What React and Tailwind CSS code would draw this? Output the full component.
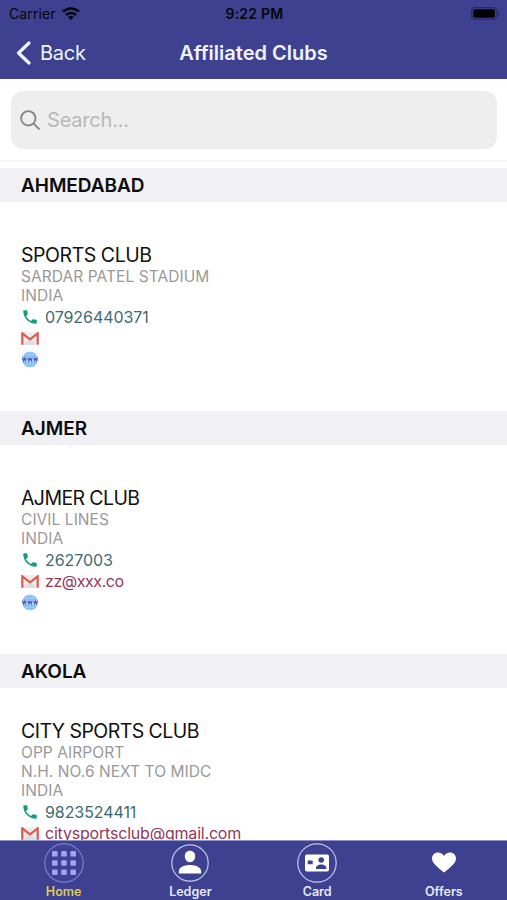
const clubs = [
  {
    city: "AHMEDABAD",
    pad: "pt-[42px]",
    name: "SPORTS CLUB",
    nameClass: "tracking-[-0.45px]",
    lines: ["SARDAR PATEL STADIUM", "INDIA"],
    phone: "07926440371",
    email: "",
  },
  {
    city: "AJMER",
    pad: "pt-[42px]",
    name: "AJMER CLUB",
    nameClass: "tracking-[-0.6px]",
    lines: ["CIVIL LINES", "INDIA"],
    phone: "2627003",
    email: "zz@xxx.co",
    emailClass: "tracking-[-0.45px]",
  },
  {
    city: "AKOLA",
    pad: "pt-8",
    name: "CITY SPORTS CLUB",
    nameClass: "tracking-[-0.55px]",
    lines: ["OPP AIRPORT", "N.H. NO.6 NEXT TO MIDC", "INDIA"],
    phone: "9823524411",
    email: "citysportsclub@gmail.com",
    emailClass: "tracking-[-0.2px]",
  },
];

function WifiIcon() {
  return (
    <svg width="18" height="13" viewBox="0 0 18 13" fill="none" stroke="#06060f" strokeWidth="2.5">
      <path d="M1 4.700a11.400 11.400 0 0 1 16 0" />
      <path d="M4 8a7.200 7.200 0 0 1 10 0" />
      <path d="M9 13 6.200 10.100a4 4 0 0 1 5.600 0Z" fill="#06060f" stroke="none" />
    </svg>
  );
}

function BatteryIcon() {
  return (
    <svg width="29" height="13" viewBox="0 0 29 13">
      <rect x="0.6" y="0.6" width="25" height="11.8" rx="3.4" fill="none" stroke="#2a2b62" strokeWidth="1.2" />
      <rect x="2.2" y="2.2" width="21.8" height="8.6" rx="1.8" fill="#000" />
      <path d="M27 4.300q1.600.7 1.600 2.200T27 8.700Z" fill="#2a2b62" />
    </svg>
  );
}

function PhoneIcon() {
  return (
    <svg width="18" height="18" viewBox="0 0 24 24" fill="#0f9f80">
      <path d="M6.620 10.790c1.440 2.830 3.760 5.140 6.590 6.590l2.200-2.200c.27-.27.67-.36 1.020-.24 1.120.37 2.330.57 3.570.57.55 0 1 .45 1 1V20c0 .55-.45 1-1 1-9.390 0-17-7.610-17-17 0-.55.45-1 1-1h3.500c.55 0 1 .45 1 1 0 1.250.2 2.450.57 3.570.11.35.03.74-.25 1.020l-2.200 2.200z" />
    </svg>
  );
}

function GmailIcon() {
  return (
    <svg width="18" height="13" viewBox="0 0 18 13">
      <rect x="0.3" y="0.3" width="17.4" height="12.4" rx="1" fill="#ececec" />
      <path d="M2.500 12.700 9 6.800l6.500 5.900Z" fill="#dedede" />
      <path d="M1.300 12.700V1.400L9 7.400l7.700-6v11.300" fill="none" stroke="#dc5a52" strokeWidth="2.2" />
    </svg>
  );
}

function WebIcon() {
  return (
    <svg width="18" height="17" viewBox="0 0 18 17">
      <circle cx="9" cy="8.5" r="7.8" fill="#74b5f5" />
      <g fill="none" stroke="#c5e1fc" strokeWidth="0.6">
        <ellipse cx="9" cy="8.5" rx="4" ry="7.8" />
        <path d="M9 .8v15.400M2.800 4h12.400M2.800 13h12.400" />
      </g>
      <rect x="1" y="5.9" width="16" height="4.8" fill="#b4d7fb" />
      <g fill="none" stroke="#4c56b4" strokeWidth="1.1">
        <path d="m1.500 6.700.9 3 1-2.500 1 2.500.9-3M6.900 6.700l.9 3L9 7.200l1.200 2.500.9-3M12.700 6.700l.9 3 1-2.500 1 2.500.9-3" />
      </g>
    </svg>
  );
}

function ContactRow({ icon, children, textClass = "" }) {
  return (
    <div className="flex h-[21.5px] items-center gap-1.5">
      <span className="flex w-[18px] justify-center">{icon}</span>
      <span className={`text-[16px] leading-[21px] ${textClass}`}>{children}</span>
    </div>
  );
}

function Club({ club }) {
  return (
    <section className="h-[243px] shrink-0">
      <h2 className="h-[34px] bg-[#f0f0f5] pl-[21px] pt-px text-[19px] font-semibold leading-[34px] tracking-[-0.05px] text-[#0b0b0b]">
        {club.city}
      </h2>
      <div className={`pl-[21px] ${club.pad}`}>
        <h3 className={`h-[23px] text-[19.5px] leading-[22px] text-[#111] ${club.nameClass}`}>{club.name}</h3>
        {club.lines.map((line) => (
          <p key={line} className="h-[19px] text-[15.5px] leading-[19px] tracking-[0.06px] text-[#999]">{line}</p>
        ))}
        <div className="mt-px">
          <ContactRow icon={<PhoneIcon />} textClass="pt-px text-[#3d6a72] tracking-[-0.08px]">{club.phone}</ContactRow>
          <ContactRow icon={<GmailIcon />} textClass={`text-[#90385c] ${club.emailClass || ""}`}>{club.email}</ContactRow>
          <ContactRow icon={<WebIcon />} />
        </div>
      </div>
    </section>
  );
}

function GridIcon() {
  return (
    <svg width="40" height="40" viewBox="0 0 40 40">
      <circle cx="20" cy="20" r="19.2" fill="none" stroke="#7a7fd6" strokeWidth="1.2" />
      {[8, 17.2, 26.4].map((y) =>
        [8, 17.2, 26.4].map((x) => (
          <rect key={`${x}-${y}`} x={x} y={y} width="5.6" height="5.6" rx="1.2" fill="#9fa4fa" />
        ))
      )}
    </svg>
  );
}

function PersonIcon() {
  return (
    <svg width="40" height="40" viewBox="0 0 40 40">
      <circle cx="20" cy="20" r="18.2" fill="none" stroke="#c3c6f0" strokeWidth="1.2" />
      <path d="M20 7.800c3.200 0 5.200 2.400 5.200 5.400 0 3.200-2.200 6-5.200 6s-5.200-2.800-5.200-6c0-3 2-5.400 5.200-5.400ZM8.800 30.500v-2c0-4.500 6-6.500 11.200-6.500s11.200 2 11.200 6.500v2Z" fill="#fff" />
    </svg>
  );
}

function CardIcon() {
  return (
    <svg width="40" height="40" viewBox="0 0 40 40">
      <circle cx="20" cy="20" r="19.2" fill="none" stroke="#c3c6f0" strokeWidth="1.2" />
      <rect x="8" y="11.5" width="24" height="17" rx="1.8" fill="#fff" />
      <g fill="#3d418f">
        <rect x="10.7" y="17.5" width="5" height="3.8" rx="0.5" />
        <circle cx="24.2" cy="17" r="2.8" />
        <path d="M19 26v-1c0-2.300 2.600-3.500 5.200-3.500s5.200 1.200 5.200 3.500v1Z" />
      </g>
    </svg>
  );
}

function HeartIcon() {
  return (
    <svg width="40" height="40" viewBox="0 0 40 40">
      <path d="M20 29.500c-1-.8-3.500-2.700-6-5-3.500-3.100-6-5.500-6-8.900C8 12 10.600 9.500 14 9.500c2.500 0 4.800 1.300 6 3.500 1.200-2.200 3.500-3.500 6-3.500 3.400 0 6 2.500 6 6.100 0 3.400-2.500 5.800-6 8.900-2.500 2.300-5 4.200-6 5Z" fill="#fff" />
    </svg>
  );
}

const tabs = [
  { label: "Home", icon: <GridIcon />, color: "text-[#dccb55]" },
  { label: "Ledger", icon: <PersonIcon />, color: "text-[#e6e8ff]" },
  { label: "Card", icon: <CardIcon />, color: "text-[#e6e8ff]" },
  { label: "Offers", icon: <HeartIcon />, color: "text-[#e6e8ff]" },
];

export default function App() {
  return (
    <div className="flex h-[900px] w-[507px] flex-col overflow-hidden bg-white font-['Inter',sans-serif]">
      <header className="h-[79px] shrink-0 bg-[#3d418f]">
        <div className="grid h-[27px] grid-cols-3 items-center pl-[9px] pr-[7px] text-[#06060f]">
          <div className="flex items-center gap-1.5 text-[14px] tracking-[0.1px]">
            <span>Carrier</span>
            <WifiIcon />
          </div>
          <span className="text-center text-[14px] font-semibold tracking-[0.25px]">9:22 PM</span>
          <div className="flex justify-end"><BatteryIcon /></div>
        </div>
        <div className="grid h-[51px] grid-cols-[1fr_auto_1fr] items-center px-4 text-[#f0f3ff]">
          <div className="flex items-center gap-2 text-[20px] tracking-[-0.25px]">
            <svg width="16" height="24" viewBox="0 0 16 24" fill="none" stroke="#f0f3ff" strokeWidth="3.2" strokeLinecap="round" strokeLinejoin="round">
              <path d="M13 2 2.500 12 13 22" />
            </svg>
            <span>Back</span>
          </div>
          <h1 className="text-[20px] font-semibold">Affiliated Clubs</h1>
        </div>
      </header>
      <div className="h-[83px] shrink-0 border-b-2 border-[#f4f4f4] px-[11px] pt-3">
        <div className="mr-[-1px] flex h-[58px] items-center gap-[7px] rounded-[12px] bg-[#eee] pl-[9px]">
          <svg width="20" height="20" viewBox="0 0 20 20" fill="none" stroke="#858585" strokeWidth="1.9" strokeLinecap="round">
            <circle cx="8.3" cy="8.3" r="7.2" />
            <path d="m13.700 13.700 5.200 5.200" />
          </svg>
          <span className="text-[20px] tracking-[-0.2px] text-[#b8b8b8]">Search...</span>
        </div>
      </div>
      <main className="flex min-h-0 flex-1 flex-col overflow-hidden pt-1.5">
        {clubs.map((club) => <Club key={club.city} club={club} />)}
      </main>
      <nav className="grid h-[60px] shrink-0 grid-cols-4 border-t border-[#8d92c8] bg-[#3d418f]">
        {tabs.map((tab) => (
          <div key={tab.label} className="flex flex-col items-center pl-[0.5px] pt-[2px]">
            {tab.icon}
            <span className={`pt-px text-[12.5px] font-semibold leading-4 ${tab.color}`}>{tab.label}</span>
          </div>
        ))}
      </nav>
    </div>
  );
}
